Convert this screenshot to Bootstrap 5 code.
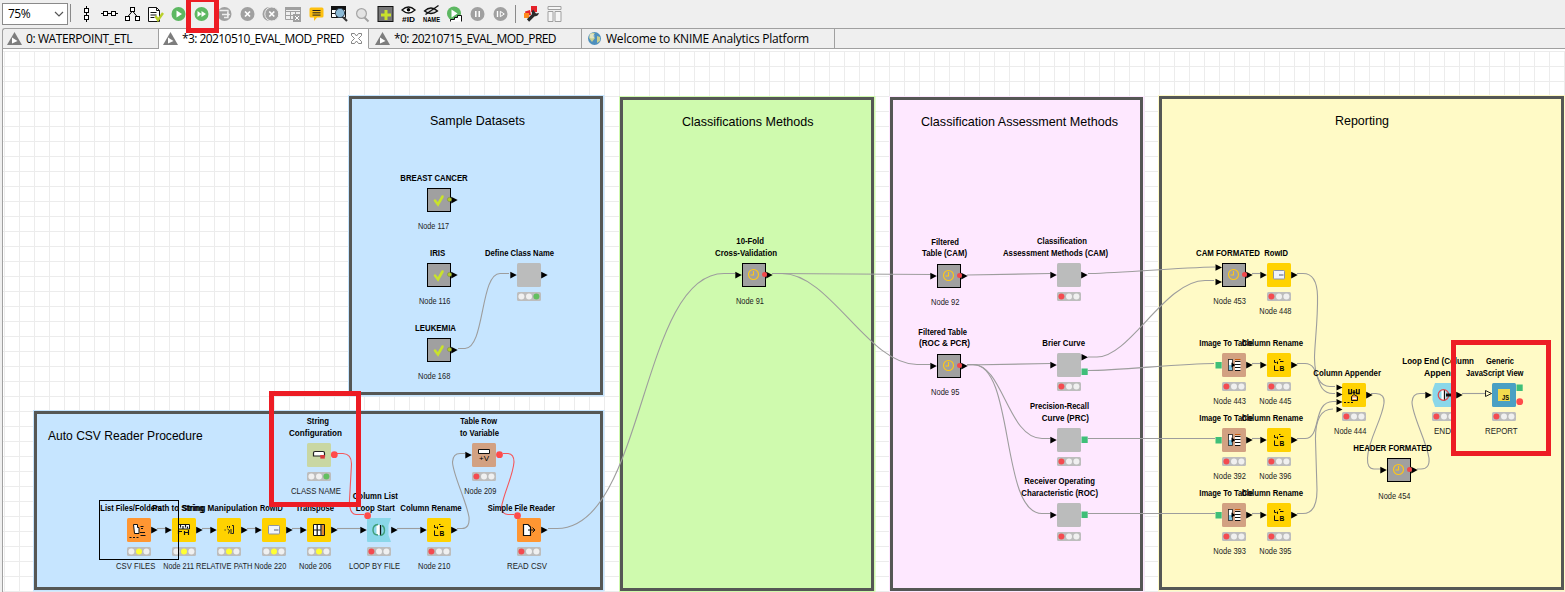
<!DOCTYPE html>
<html lang="en">
<head>
<meta charset="utf-8">
<title>KNIME Analytics Platform</title>
<link href="https://cdn.jsdelivr.net/npm/bootstrap@5.3.0/dist/css/bootstrap.min.css" rel="stylesheet">
<style>
body{width:1565px;height:592px;background:#efefef;font-family:"Open Sans","Noto Sans",sans-serif;font-size:12px;line-height:16px;color:#000}
.toolbar{height:28px;padding-left:2px}
.zoom-box{width:66px;height:22px;margin-top:3px;border:1px solid #8a8a8a;background:#fff;padding:0 3px 0 5px}
.zoom-box span{letter-spacing:-.5px}
.rule{width:1px;height:18px;background:#8a8a8a}
.rule-first{margin:4px 0 0 2px}
.rule-last{margin:0 1px 0 0}
.tools{gap:6px;height:28px;margin-left:7px}
.tools svg{width:17px;height:18px;flex:none;overflow:visible}
.tabs{height:21px;margin-left:2px;border-top:1px solid #a0a0a0;border-left:1px solid #a0a0a0;border-radius:3px 0 0 0;flex-wrap:nowrap}
.tabs .tab{height:20px;border-right:1px solid #a0a0a0;border-bottom:1px solid #a0a0a0;padding-left:3px;gap:3px;white-space:nowrap}
.tabs .tab.active{background:#fff;border-bottom-color:#fff}
.tabs .tab.wide{padding-left:5px}
.tabs .rest{border-bottom:1px solid #a0a0a0}
.tabs svg{flex:none}
.board{height:543px;margin-left:2px;border-left:1px solid #a0a0a0;background:#fff;overflow:hidden}
.board svg{left:-3px;top:-49px}
.board text{font-family:"Liberation Sans",Arial,sans-serif;font-size:8.2px}
.board .ttl{font-weight:700}
.board .sub{fill:#222}
.board .head{font-size:12.4px}
.board .wire{fill:none;stroke:#9d9d9d;stroke-width:1.1}
.board .var{fill:none;stroke:#f5565a;stroke-width:1.1}
.mark-tool{left:186px;top:-3px;width:33px;height:36px;border:5px solid #ed1c24}
</style>
</head>
<body class="overflow-hidden position-relative">
<div class="toolbar d-flex align-items-start">
  <div class="zoom-box d-flex align-items-center justify-content-between"><span>75%</span>
    <svg width="10" height="6"><path d="M1 1l4 4 4-4" fill="none" stroke="#555" stroke-width="1.2"/></svg></div>
  <div class="rule rule-first"></div>
  <div class="tools d-flex align-items-center">
    <svg viewBox="0 0 17 18"><g fill="#fff" stroke="#000"><path d="M8.500 1v16"/><rect x="6.500" y="3.500" width="4" height="4"/><rect x="6.500" y="10.500" width="4" height="4"/></g></svg>
    <svg viewBox="0 0 17 18"><g fill="#fff" stroke="#000"><path d="M0 8.500h17"/><rect x="2.500" y="6.500" width="4" height="4"/><rect x="10.500" y="6.500" width="4" height="4"/></g></svg>
    <svg viewBox="0 0 17 18"><g fill="#fff" stroke="#000"><path d="M8.500 6l-5 6M8.500 6l5 6" fill="none"/><rect x="6.500" y="2.500" width="4" height="4"/><rect x="1.500" y="11.500" width="4" height="4"/><rect x="11.500" y="11.500" width="4" height="4"/></g></svg>
    <svg viewBox="0 0 17 18"><path d="M1.500 2.500h8l3 3v11h-11z" fill="#fff" stroke="#111"/><path d="M9.500 2.500v3h3M3.500 7.500h6M3.500 10h6M3.500 12.500h4" fill="none" stroke="#111"/><path d="M8.500 11l2.500 4 5-7" fill="none" stroke="#b9cf2b" stroke-width="2.400"/></svg>
    <svg viewBox="0 0 17 18"><circle cx="8.500" cy="9" r="7" fill="#5db862"/><path d="M6.500 5.500v7l5.500-3.500z" fill="#fff"/></svg>
    <svg viewBox="0 0 17 18"><circle cx="8.500" cy="9" r="7" fill="#5db862"/><path d="M4.500 6v6l4-3zM8.500 6v6l4.500-3z" fill="#fff"/></svg>
    <svg viewBox="0 0 17 18"><circle cx="8.500" cy="9" r="7" fill="#a0a0a0"/><path d="M3.500 5.500h8.500v2.500M8 12.500h4v-1.500M6 9.500h6" fill="none" stroke="#eee" stroke-width="1.300"/><path d="M11 6.800v5.400l3.200-2.700z" fill="#eee"/></svg>
    <svg viewBox="0 0 17 18"><circle cx="8.500" cy="9" r="7" fill="#a0a0a0"/><path d="M6 6.500l5 5M11 6.500l-5 5" stroke="#fff" stroke-width="1.700"/></svg>
    <svg viewBox="0 0 17 18"><circle cx="7.500" cy="9" r="7" fill="#a0a0a0"/><circle cx="9.800" cy="9" r="7" fill="#a0a0a0" stroke="#eee"/><path d="M7.300 6.500l5 5M12.300 6.500l-5 5" stroke="#fff" stroke-width="1.700"/></svg>
    <svg viewBox="0 0 17 18"><path d="M.5 2.500h15v12h-15zM.5 6.500h15M.5 10.500h15M5.500 6v8.500M10.500 6v8.500" fill="none" stroke="#a0a0a0"/><path d="M0 2h16v3h-16z" fill="#a0a0a0"/><rect x="8" y="9" width="8" height="8" fill="#a0a0a0"/><path d="M10 11l4 4M14 11l-4 4" stroke="#fff"/></svg>
    <svg viewBox="0 0 17 18"><path d="M3 2.500h11q1.500 0 1.500 1.500v7q0 1.500-1.500 1.500h-5l-3 3.500v-3.500h-3q-1.500 0-1.500-1.500v-7q0-1.500 1.500-1.500z" fill="#fdc010"/><path d="M4.500 5.500h8M4.500 7.800h8M4.500 10.100h8" stroke="#222"/></svg>
    <svg viewBox="0 0 17 18"><path d="M.5 1.500h14v11h-14zM.5 8.500h14M5.500 5v8M10 5v8" fill="#fff" stroke="#111"/><path d="M0 1h15v4h-15z" fill="#111"/><path d="M12 12l4 4" stroke="#333" stroke-width="2.200"/><circle cx="9" cy="8" r="4.600" fill="#8bb9d5" stroke="#345"/></svg>
    <svg viewBox="0 0 17 18"><path d="M10 12l4.500 4.500" stroke="#a0a0a0" stroke-width="2"/><circle cx="7.500" cy="8.500" r="4.900" fill="#e3e3e3" stroke="#a5a5a5" stroke-width="1.200"/></svg>
    <svg viewBox="0 0 17 18"><rect x="1" y="1.500" width="15" height="15" fill="#777" stroke="#111"/><path d="M9 5v10M4 10h10" stroke="#c9e22c" stroke-width="3"/></svg>
    <svg viewBox="0 0 17 18"><path d="M2 5q6.500-6 13 0q-6.500 6-13 0z" fill="#fff" stroke="#111" stroke-width="1.300"/><circle cx="8.500" cy="4.800" r="1.800"/><text x="2" y="17" textLength="13" lengthAdjust="spacingAndGlyphs" font-family="Liberation Sans,sans-serif" font-size="8" font-weight="700">#ID</text></svg>
    <svg viewBox="0 0 17 18"><path d="M1.500 6q6.500-6 13 0q-6.500 5-13 0z" fill="#ddd" stroke="#111" stroke-width="1.300"/><path d="M2.500 9.500l13-9" stroke="#111" stroke-width="1.300"/><text x="0" y="17" textLength="17" lengthAdjust="spacingAndGlyphs" font-family="Liberation Sans,sans-serif" font-size="7.500" font-weight="700">NAME</text></svg>
    <svg viewBox="0 0 17 18"><circle cx="8" cy="8.500" r="7" fill="#5db862"/><path d="M5.500 4.500v8l6-4z" fill="#fff"/><path d="M4.500 16.500v-2h4v-2h3v-2h4v6" fill="#fff" stroke="#111"/></svg>
    <svg viewBox="0 0 17 18"><circle cx="8.500" cy="9" r="7" fill="#a0a0a0"/><path d="M6.800 6v6M10.200 6v6" stroke="#fff" stroke-width="1.500"/></svg>
    <svg viewBox="0 0 17 18"><circle cx="8.500" cy="9" r="7" fill="#a0a0a0"/><path d="M5.500 6v6" stroke="#fff" stroke-width="1.400"/><path d="M8.300 6.300v5.400l4-2.700z" fill="none" stroke="#fff"/></svg>
    <div class="rule rule-last"></div>
    <svg viewBox="0 0 17 18"><rect x="8" y="1" width="6" height="6" fill="#e5222a"/><path d="M2 6.500l5-1.500 1 5-5 1z" fill="#e5222a"/><rect x="1" y="8" width="5" height="5" fill="#ff8a1c"/><path d="M5 15.500l6-6" stroke="#2b2b2b" stroke-width="3.200"/><path d="M10 4.500q-3 4 1 6.500q3.500 1 5-3l-3 .5-1.500-2z" fill="#2b2b2b"/></svg>
    <svg viewBox="0 0 17 18"><path d="M2 1.500h13v3h-13zM2 6.500h5v10h-5zM9 6.500h6v10h-6z" fill="#f6f6f6" stroke="#a0a0a0"/></svg>
  </div>
</div>

<nav class="tabs d-flex">
  <div class="tab d-flex align-items-center" style="width:156px"><svg width="17" height="15"><path d="M8.500 1L16 14H1z" fill="#7d7d7d"/><path d="M6 6.500v6l5.500-2.500z" fill="#fff"/></svg><span data-w="106">0: WATERPOINT_ETL</span></div>
  <div class="tab active d-flex align-items-center" style="width:210px"><svg width="17" height="15"><path d="M8.500 1L16 14H1z" fill="#7d7d7d"/><path d="M6 6.500v6l5.500-2.500z" fill="#fff"/></svg><span data-w="162">*3: 20210510_EVAL_MOD_PRED</span><svg class="ms-1" width="11" height="11"><path d="M.5.500h3l2 2.500 2-2.500h3v2l-3 3 3 3v2h-3l-2-2.500-2 2.500h-3v-2l3-3-3-3z" fill="#fff" stroke="#777" stroke-width=".9"/></svg></div>
  <div class="tab wide d-flex align-items-center" style="width:213px"><svg width="17" height="15"><path d="M8.500 1L16 14H1z" fill="#7d7d7d"/><path d="M6 6.500v6l5.500-2.500z" fill="#fff"/></svg><span data-w="162">*0: 20210715_EVAL_MOD_PRED</span></div>
  <div class="tab d-flex align-items-center ps-1" style="width:253px"><svg width="17" height="15"><circle cx="8.500" cy="7.500" r="6.500" fill="#4d8fbd"/><path d="M4 3q3-2 5-1l-2 3 2 2-3 4-3-4zM11 5l3 1v4l-3 2z" fill="#c8cf90"/><circle cx="6" cy="5" r="2.500" fill="#fff" opacity=".45"/></svg><span data-w="203">Welcome to KNIME Analytics Platform</span></div>
  <div class="rest flex-grow-1"></div>
</nav>

<main class="board position-relative">
  <svg class="position-absolute" width="1565" height="592" viewBox="0 0 1565 592">
    <defs>
      <pattern id="grid" x="4" y="51" width="15" height="15" patternUnits="userSpaceOnUse"><path d="M.5 0v15M0 .5h15" stroke="#ececec"/></pattern>
      <g id="in"><path d="M-6.700 8.800v6.600l6.500-3.300z"/></g>
      <g id="out"><path d="M24.200 8.800v6.600l6.500-3.300z"/></g>
      <g id="rowid"><rect x="6.500" y="7.500" width="11" height="8.500" rx=".8" fill="#f1f4fb" stroke="#8d94a6"/><path d="M12 12h4.500" stroke="#555f75"/></g>
      <g id="rename"><path d="M7.500 7v2.500h2M10.500 8.500v2.500M12 6.500h1.500M13 8.500h3.500M7.500 12.500v5h4" fill="none" stroke="#111"/><text x="12.500" y="18" style="font-size:7.500px;font-weight:700" textLength="4.800" lengthAdjust="spacingAndGlyphs">B</text></g>
      <g id="img"><rect x="6.500" y="6.500" width="4" height="11" fill="#fff" stroke="#222" stroke-width=".8"/><path d="M7 12h3v5h-3z" fill="#7cc6e6"/><path d="M9.500 9.500v5l4-2.500z"/><path d="M13 6.700h5.500" stroke="#c55a11" stroke-width="1.400"/><path d="M13 7.500h5.500v10.500h-5.500z" fill="#fff"/><path d="M13 8.500h5.500M13 11.500h5.500M13 14.500h5.500M13 17.500h5.500" stroke="#111" stroke-width="1.200"/></g>
      <g id="check"><path d="M8 12.500l3 4 4.500-8" fill="none" stroke="#c9e22c" stroke-width="2.600" stroke-linecap="round"/></g>
      <g id="clock"><circle cx="11.500" cy="11.500" r="5" fill="none" stroke="#ffc814" stroke-width="1.100"/><path d="M11.500 8v4h-3" fill="none" stroke="#ffc814" stroke-width="1.100"/></g>
      <g id="files"><path d="M6.500 6.500h4v3h1.500v6h-4.500z" fill="#fff" stroke="#111"/><path d="M13.500 8.500h3M14 10.500h2M13 14.500h5M13.500 17.500h5M2.500 19.500h2M6 19.500h2M9.500 19.500h2" stroke="#111" stroke-width="1.200"/></g>
      <g id="path2s"><path d="M6.500 6.500h11v4.500h-11z" fill="#fff" stroke="#111"/><path d="M8.500 7v2.500M11 8v3M13.500 7v2.500M15.500 8.500v2M6.500 12v4M7 13.500h3M12.500 13v4M13 14.500h4M16.500 12v5" stroke="#111" stroke-width="1.200"/></g>
      <g id="strman"><path d="M7.500 12h1.200M10.500 8v1.500M12.500 8v2M10.500 11l2 1.500-1 3M14 11v5M15 7.500h1.500v8h-2" fill="none" stroke="#222"/></g>
      <g id="transp"><path d="M6.500 6.500h11v11h-11z" fill="#fff" stroke="#111"/><path d="M14.500 7h2.500v10h-2.500z" fill="#e38b2d"/><path d="M10.200 6.500v11M14 6.500v11M6.500 12h7.500" stroke="#111" stroke-width="1.200"/></g>
      <g id="config"><path d="M6.500 13v-3q0-1.500 1.500-1.500h8q1.500 0 1.500 1.500v3z" fill="#fff" stroke="#222" stroke-width="1.200"/><rect x="13.300" y="12" width="4.500" height="3.600" fill="#d8393d"/></g>
      <g id="loops"><rect x="9.500" y="7" width="4.500" height="10" fill="#fff"/><path d="M13.500 7v10.500" stroke="#111" stroke-width="1.300"/><path d="M11 6.500q-5 .5-5 5.500t5 5M15 7.500q2.500 1 2.500 5t-4 5" fill="none" stroke="#3f9e78" stroke-width="1.400"/></g>
      <g id="loope"><rect x="9.500" y="7" width="4.500" height="10" fill="#fff"/><path d="M12.500 7v10.500" stroke="#111" stroke-width="1.300"/><circle cx="11.500" cy="12" r="5.300" fill="none" stroke="#e0474c" stroke-width="1.200"/><path d="M14 12h5" stroke="#111" stroke-width="3"/></g>
      <g id="reader"><path d="M6.500 6.500h4.500l2.500 2.500v8.500h-7z" fill="#fff" stroke="#111" stroke-width="1.200"/><path d="M11 12h6.500M15.500 9.500l2.500 2.500-2.500 2.500" fill="none" stroke="#111"/></g>
      <g id="tovar"><path d="M6.500 6.500h11v4h-11z" fill="#fff" stroke="#111"/><text x="7" y="17.500" textLength="10" lengthAdjust="spacingAndGlyphs" style="font-size:6.500px">+V</text></g>
      <g id="append"><path d="M6.800 6v4.500h2.700v-4.500M14.500 6v4.500h2.700v-4.500M12 7v4M10.500 9.500h3" fill="none" stroke="#111" stroke-width="1.300"/><path d="M9.500 17.500v-4l2.500-2 3.500 2v4z" fill="#f4a44a" stroke="#111"/><path d="M10.500 14.500h4v1.500h-4z" fill="#fff"/><path d="M2 19.500h2M5.500 19.500h2M9 19.500h2" stroke="#111" stroke-width="1.200"/></g>
      <g id="js"><rect x="6" y="6" width="12" height="12" fill="#f2da4e"/><text x="10" y="17" textLength="7" lengthAdjust="spacingAndGlyphs" style="font-size:7px;font-weight:700">JS</text></g>
    </defs>
    <rect x="3" y="51" width="1562" height="541" fill="url(#grid)"/>
    <g id="boxes"></g><g id="wires"></g><g id="nodes"></g><g id="labels"></g>
    <rect x="99.500" y="500.500" width="79" height="59" fill="none" stroke="#000"/>
    <g fill="none" stroke="#ed1c24" stroke-width="5"><rect x="271.500" y="393.500" width="87" height="111"/><rect x="1453.500" y="342.500" width="95" height="111"/></g>
  </svg>
</main>
<div class="mark-tool position-absolute"></div>

<script src="https://cdn.jsdelivr.net/npm/bootstrap@5.3.0/dist/js/bootstrap.bundle.min.js"></script>
<script>
const put=(id,html)=>document.getElementById(id).innerHTML=html;
// annotation areas: x, y, right, bottom, fill
put('boxes',[[349,96,603,395,'#c6e5ff'],[34,411,603,590,'#c6e5ff'],[620,97,874,591,'#cffaae'],[890,97,1143,591,'#fee8ff'],[1159,96,1564,590,'#fffac6']]
 .map(([x,y,r,b,f])=>`<rect x="${x-1}" y="${y-1}" width="${r-x+2.5}" height="${b-y+2.500}" fill="${f}"/><rect x="${x+1.5}" y="${y+1.5}" width="${r-x-3}" height="${b-y-3}" fill="${f}" stroke="#555755" stroke-width="3"/>`).join(''));
const wires=['M458 348.500H465C485 348 480 273.500 500 273.500H509','M548 528.500H557C645 528.500 640 273.500 724 273.500H735','M772 273.500L932 274.500','M772 273.500H782C830 273.500 868 364.500 917 364.500H930',
'M967 275L1050 273.500','M967 365L1050 363.500','M967 364.500H973C1003 364.500 1008 438.500 1042 438.500H1050','M973 364.500C1015 364.500 1000 513.500 1042 513.500H1050',
'M1088 273.500C1110 273.500 1180 267.500 1215 267','M1088 357H1097C1130 357 1165 280.500 1205 280.500H1214','M1088 370.500C1120 370.500 1180 363.500 1214 363.500','M1088 438.500H1215','M1088 513.500H1215',
'M1252 273.500H1260','M1252 363.500H1260','M1252 438.500H1260','M1252 513.500H1260','M1297 273.500H1303Q1317 273.500 1317.500 296C1318 320 1314.500 345 1314.500 358Q1315 386.500 1330 386.500H1335',
'M1297 363.500H1305C1322 363.500 1313 393.500 1333 393.500H1335','M1297 438.500H1305C1322 438.500 1312 401.500 1333 401.500H1336','M1297 513.500H1303Q1317 513.500 1317 490L1315.500 440Q1315 409 1333 409',
'M1371 393.500H1376Q1385 394 1384 403C1382 420 1368 440 1367.500 458Q1367 469 1374 469H1381','M1417 469H1421Q1430 469 1429 458C1426 440 1412 415 1412 402Q1412.500 393.500 1420 393.500H1425','M1462 393.500H1485',
'M157 528.500H166','M202 528.500H211','M247 528.500H256','M292 528.500H301','M337 528.500H360','M397 528.500H420','M457 528.500H462Q470 528.500 469 517C466 500 453 475 452.500 462Q453 453.500 460 453.500H465'];
const vars=['M337 453.500H343Q351.500 454 351.500 464L349.500 500Q349 514 356 514.500H364','M503 453.500H508Q514 454 514 462C513 476 504 492 501.500 507Q502 514.500 508 514.500H514'];
put('wires',wires.map(d=>`<path class="wire" d="${d}"/>`).join('')+vars.map(d=>`<path class="var" d="${d}"/>`).join(''));
// nodes: x, y, kind or fill, icon, lit lamp, ports (i = input, o = output)
const Y='#ffd200',G='#bbbcbc',T='#d2a182';
const nodes=[[427,188,'meta','check',,'o'],[427,263,'meta','check',,'o'],[427,338,'meta','check',,'o'],[517,263,G,,'g','io'],
[307,443,'#c9d7a3','config','g',''],[472,443,T,'tovar','r','i'],[127,518,'#ff9632','files','y','o'],[172,518,Y,'path2s','y','io'],[217,518,Y,'strman','y','io'],[262,518,Y,'rowid','y','io'],[307,518,Y,'transp','y','io'],
[367,518,'start','loops','r','io'],[427,518,Y,'rename','r','io'],[517,518,'#ff9632','reader','r','o'],
[742,263,'wait','clock',,'io'],[937,264,'wait','clock',,'io'],[937,354,'wait','clock',,'io'],[1222,263,'wait','clock',,'o'],[1387,458,'wait','clock',,'io'],
[1057,263,G,,'r','io'],[1057,353,G,,'r','i'],[1057,428,G,,'r','i'],[1057,503,G,,'r','i'],[1267,263,Y,'rowid','r','io'],
...[353,428,503].flatMap(y=>[[1222,y,T,'img','r','o'],[1267,y,Y,'rename','r','io']]),
[1342,383,Y,'append','r','o'],[1432,383,'end','loope','r','io'],[1492,383,'#4aa0c3','js','r','']];
const lamp={r:'#f44b50',y:'#ffff33',g:'#62bf60'};
put('nodes',nodes.map(([x,y,k,ic,l,p])=>{
 let s=`<g transform="translate(${x} ${y})">`;
 if(k=='meta'||k=='wait') s+='<rect x=".5" y=".5" width="23" height="23" fill="#a0a0a0" stroke="#000"/>';
 else if(k=='start') s+='<path d="M1 0h23l-2.500 7v10l2.500 7h-23q-1 0-1-1v-22q0-1 1-1z" fill="#8ad7e9"/>';
 else if(k=='end') s+='<path d="M3 0h18l3 7v10l-3 7h-18l-2.500-7v-10z" fill="#8ad7e9"/>';
 else s+=`<rect width="24" height="24" rx="1.500" fill="${k}"/>`;
 if(ic) s+=`<use href="#${ic}"/>`;
 if(p.includes('i')) s+='<use href="#in"/>';
 if(p.includes('o')) s+='<use href="#out"/>';
 if(k=='meta') s+='<circle cx="22.500" cy="11.500" r="2.100" fill="#b5cc2e" stroke="#6d7a20" stroke-width=".4"/>';
 if(k=='wait') s+='<circle cx="22.500" cy="11.500" r="2.500" fill="#f0484c"/>';
 if(l){s+='<rect y="29" width="24" height="9" rx="1.500" fill="#bdbdbd"/>';
  [4.4,12,19.400].forEach((c,i)=>s+=`<circle cx="${c}" cy="33.500" r="3" fill="${'ryg'[i]==l?lamp[l]:'#f0f0f0'}"/>`);}
 return s+'</g>';}).join('')
 +[267.500,282].map(y=>`<path d="M1215.500 ${y-3.300}v6.600l6.500-3.300z"/>`).join('')
 +[387.500,394.500,402,409.500].map(y=>`<path d="M1336.500 ${y-3.100}v6.200l6-3.100z"/>`).join('')
 +'<path d="M1081.500 354v6.600l6.500-3.300z"/><path d="M1485.500 390.500v6l6-3z" fill="#fffac6" stroke="#222"/>'
 +[[1081.500,368.500],[1081.500,436.500],[1081.500,511.500],[1215.500,362],[1215.500,437],[1215.500,512],[1516.500,384.500]].map(([x,y])=>`<rect x="${x}" y="${y}" width="6.200" height="6.500" fill="#3fbf79"/>`).join('')
 +[[334.300,454.700],[499.500,454.700],[367.600,515.700],[517.500,515.700],[1519.700,401.700]].map(([x,y])=>`<circle cx="${x}" cy="${y}" r="3.400" fill="#ff4b4b"/>`).join(''));
// labels: class, left, right, baseline, text
const L=`head|430|525|124.600|Sample Datasets
head|682|813.500|125.600|Classifications Methods
head|921|1118|125.600|Classification Assessment Methods
head|1335|1389|124.600|Reporting
head|48|202.700|439.700|Auto CSV Reader Procedure
ttl|400.300|467.700|181|BREAST CANCER
ttl|430|445.300|256|IRIS
ttl|485|554|256|Define Class Name
ttl|415|456|331|LEUKEMIA
sub|418|449|229|Node 117
sub|419|450.300|304|Node 116
sub|418|450.300|379|Node 168
ttl|306.700|329|424|String
ttl|289|342|436|Configuration
sub|291|341|494|CLASS NAME
ttl|100.300|162|511|List Files/Folders
ttl|152.300|204|511|Path to String
ttl|182|257.500|511|String Manipulation
ttl|260|282.700|511|RowID
ttl|295.700|334|511|Transpose
ttl|352.700|398|499|Column List
ttl|355.700|395|511|Loop Start
ttl|400.300|461.700|511|Column Rename
ttl|460.300|497|424|Table Row
ttl|460|499|436|to Variable
sub|464.300|496.300|494|Node 209
ttl|487.700|555|511|Simple File Reader
sub|116|155.300|569|CSV FILES
sub|163.300|194|569|Node 211
sub|196|252.500|569|RELATIVE PATH
sub|254.300|286.300|569|Node 220
sub|299|331.300|569|Node 206
sub|349|400|569|LOOP BY FILE
sub|418|450.300|569|Node 210
sub|507|547|569|READ CSV
ttl|736.300|764|244|10-Fold
ttl|715|777|256|Cross-Validation
sub|736|764|304|Node 91
ttl|931.300|959|245|Filtered
ttl|922|967|256|Table (CAM)
sub|931|959.500|305|Node 92
ttl|918.300|967|335|Filtered Table
ttl|919|970|346|(ROC &amp; PCR)
sub|931|959.500|395|Node 95
ttl|1037|1087|244|Classification
ttl|1003|1108|256|Assessment Methods (CAM)
ttl|1042.300|1085|346|Brier Curve
ttl|1030|1089|409|Precision-Recall
ttl|1041.700|1089|421|Curve (PRC)
ttl|1024.300|1095|484|Receiver Operating
ttl|1021.300|1098|496|Characteristic (ROC)
ttl|1196|1260|256|CAM FORMATED
ttl|1264.300|1288|256|RowID
sub|1213.300|1246|304|Node 453
sub|1259.300|1291.500|314|Node 448
ttl|1199.300|1253|346|Image To Table
ttl|1241.700|1303|346|Column Rename
sub|1213.300|1246|404|Node 443
sub|1259.300|1291.500|404|Node 445
ttl|1199.300|1253|421|Image To Table
ttl|1241.700|1303|421|Column Rename
sub|1213.300|1246|479|Node 392
sub|1259.300|1291.500|479|Node 396
ttl|1199.300|1253|496|Image To Table
ttl|1241.700|1303|496|Column Rename
sub|1213.300|1246|554|Node 393
sub|1259.300|1291.500|554|Node 395
ttl|1313.300|1381|376|Column Appender
sub|1334|1366.300|434|Node 444
ttl|1353.300|1432|451|HEADER FORMATED
sub|1378.300|1410.500|499|Node 454
ttl|1402.300|1474|364|Loop End (Column
ttl|1424|1456|376|Append
sub|1434|1451|434|END
ttl|1486|1514|364|Generic
ttl|1466|1523.500|376|JavaScript View
sub|1485|1517.700|434|REPORT`.split('\n').map(r=>r.split('|'));
put('labels',L.map(([c,a,b,y,t])=>`<text class="${c}" x="${a}" y="${y}" textLength="${b-a}" lengthAdjust="spacingAndGlyphs">${t}</text>`).join(''));
// tighten tab captions to their column widths
document.querySelectorAll('[data-w]').forEach(e=>{const n=e.textContent.length,w=e.getBoundingClientRect().width;e.style.letterSpacing=((e.dataset.w-w)/n)+'px';});
</script>
</body>
</html>
